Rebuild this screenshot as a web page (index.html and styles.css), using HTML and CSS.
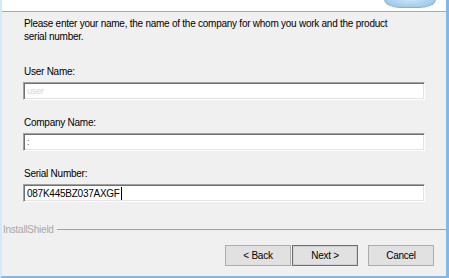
FILE: index.html
```html
<!DOCTYPE html>
<html>
<head>
<meta charset="utf-8">
<link rel="stylesheet" href="styles.css">
</head>
<body>
<div class="window">
  <div class="header">
    <div class="logo"></div>
  </div>
  <div class="content">
    <p class="intro">Please enter your name, the name of the company for whom you work and the product serial number.</p>
    <div class="field">
      <label class="label">User Name:</label>
      <div class="input"><span class="masked">user</span></div>
    </div>
    <div class="field">
      <label class="label">Company Name:</label>
      <div class="input"><span class="masked masked-dark">:</span></div>
    </div>
    <div class="field">
      <label class="label">Serial Number:</label>
      <div class="input"><span class="value">087K445BZ037AXGF</span><span class="caret"></span></div>
    </div>
  </div>
  <div class="brand">
    <span class="brand-name">InstallShield</span>
    <div class="rule"></div>
  </div>
  <div class="buttons">
    <div class="nav">
      <button class="btn">&lt; Back</button>
      <button class="btn btn-default">Next &gt;</button>
    </div>
    <button class="btn">Cancel</button>
  </div>
</div>
</body>
</html>
```

FILE: styles.css
```css
* { box-sizing: border-box; }
html, body {
  margin: 0;
  padding: 0;
  width: 449px;
  height: 278px;
  overflow: hidden;
  background: #f0f0f0;
}
body {
  font-family: "Liberation Sans", Arial, sans-serif;
  font-size: 10px;
  letter-spacing: -0.25px;
  color: #000;
}
.window {
  width: 449px;
  height: 278px;
  display: flex;
  flex-direction: column;
  background: #f0f0f0;
  border-left: 2px solid #d4e9f8;
  border-right: 3px solid #83b8e6;
  border-bottom: 2px solid #83b8e6;
}
.header {
  height: 12px;
  background: #fff;
  border-bottom: 1px solid #a9a9a9;
  display: flex;
  justify-content: flex-end;
  align-items: flex-end;
  padding-right: 10px;
  padding-bottom: 3px;
}
.logo {
  width: 52px;
  height: 9px;
  border: 1px solid #8db2cf;
  border-top: none;
  border-radius: 0 0 16px 16px / 0 0 9px 9px;
  background: radial-gradient(ellipse at 50% 0%, #cfe6f6 0%, #a8d0ee 60%, #8cbde3 100%);
}
.content {
  padding: 5px 21px 0 21px;
  display: flex;
  flex-direction: column;
}
.intro {
  margin: 0 0 22px 1px;
  line-height: 13px;
  width: 375px;
}
.field {
  display: flex;
  flex-direction: column;
  margin-bottom: 16px;
}
.field:last-child { margin-bottom: 0; }
.label {
  line-height: 13px;
  margin: 0 0 4px 1px;
}
.input {
  height: 18px;
  background: #fff;
  border: 1px solid;
  border-color: #a0a0a0 #ffffff #ffffff #a0a0a0;
  box-shadow: inset 1px 1px 0 #707070, inset -1px -1px 0 #e3e3e3;
  display: flex;
  align-items: center;
  padding-left: 3px;
  line-height: 13px;
}
.masked {
  color: #d4d4d4;
  font-size: 9px;
}
.masked-dark { color: #555; }
.caret {
  width: 1px;
  height: 13px;
  background: #000;
  margin-left: 1px;
}
.brand {
  margin-top: 21px;
  display: flex;
  align-items: center;
  height: 13px;
}
.brand-name {
  color: #a8a8a8;
  line-height: 13px;
  padding-left: 1px;
}
.rule {
  flex: 1;
  height: 1px;
  background: #a0a0a0;
  margin-left: 3px;
}
.buttons {
  margin-top: 9px;
  display: flex;
  justify-content: flex-end;
  gap: 10px;
  padding-right: 12px;
}
.nav {
  display: flex;
  gap: 1px;
}
.btn {
  width: 66px;
  height: 21px;
  padding: 0;
  font-family: "Liberation Sans", Arial, sans-serif;
  font-size: 10px;
  letter-spacing: -0.25px;
  color: #000;
  background: #e1e1e1;
  border: 1px solid #adadad;
  border-radius: 0;
}
.btn-default {
  border: 1px solid #707070;
  box-shadow: inset 0 0 0 1px #d0d0d0;
}
```
